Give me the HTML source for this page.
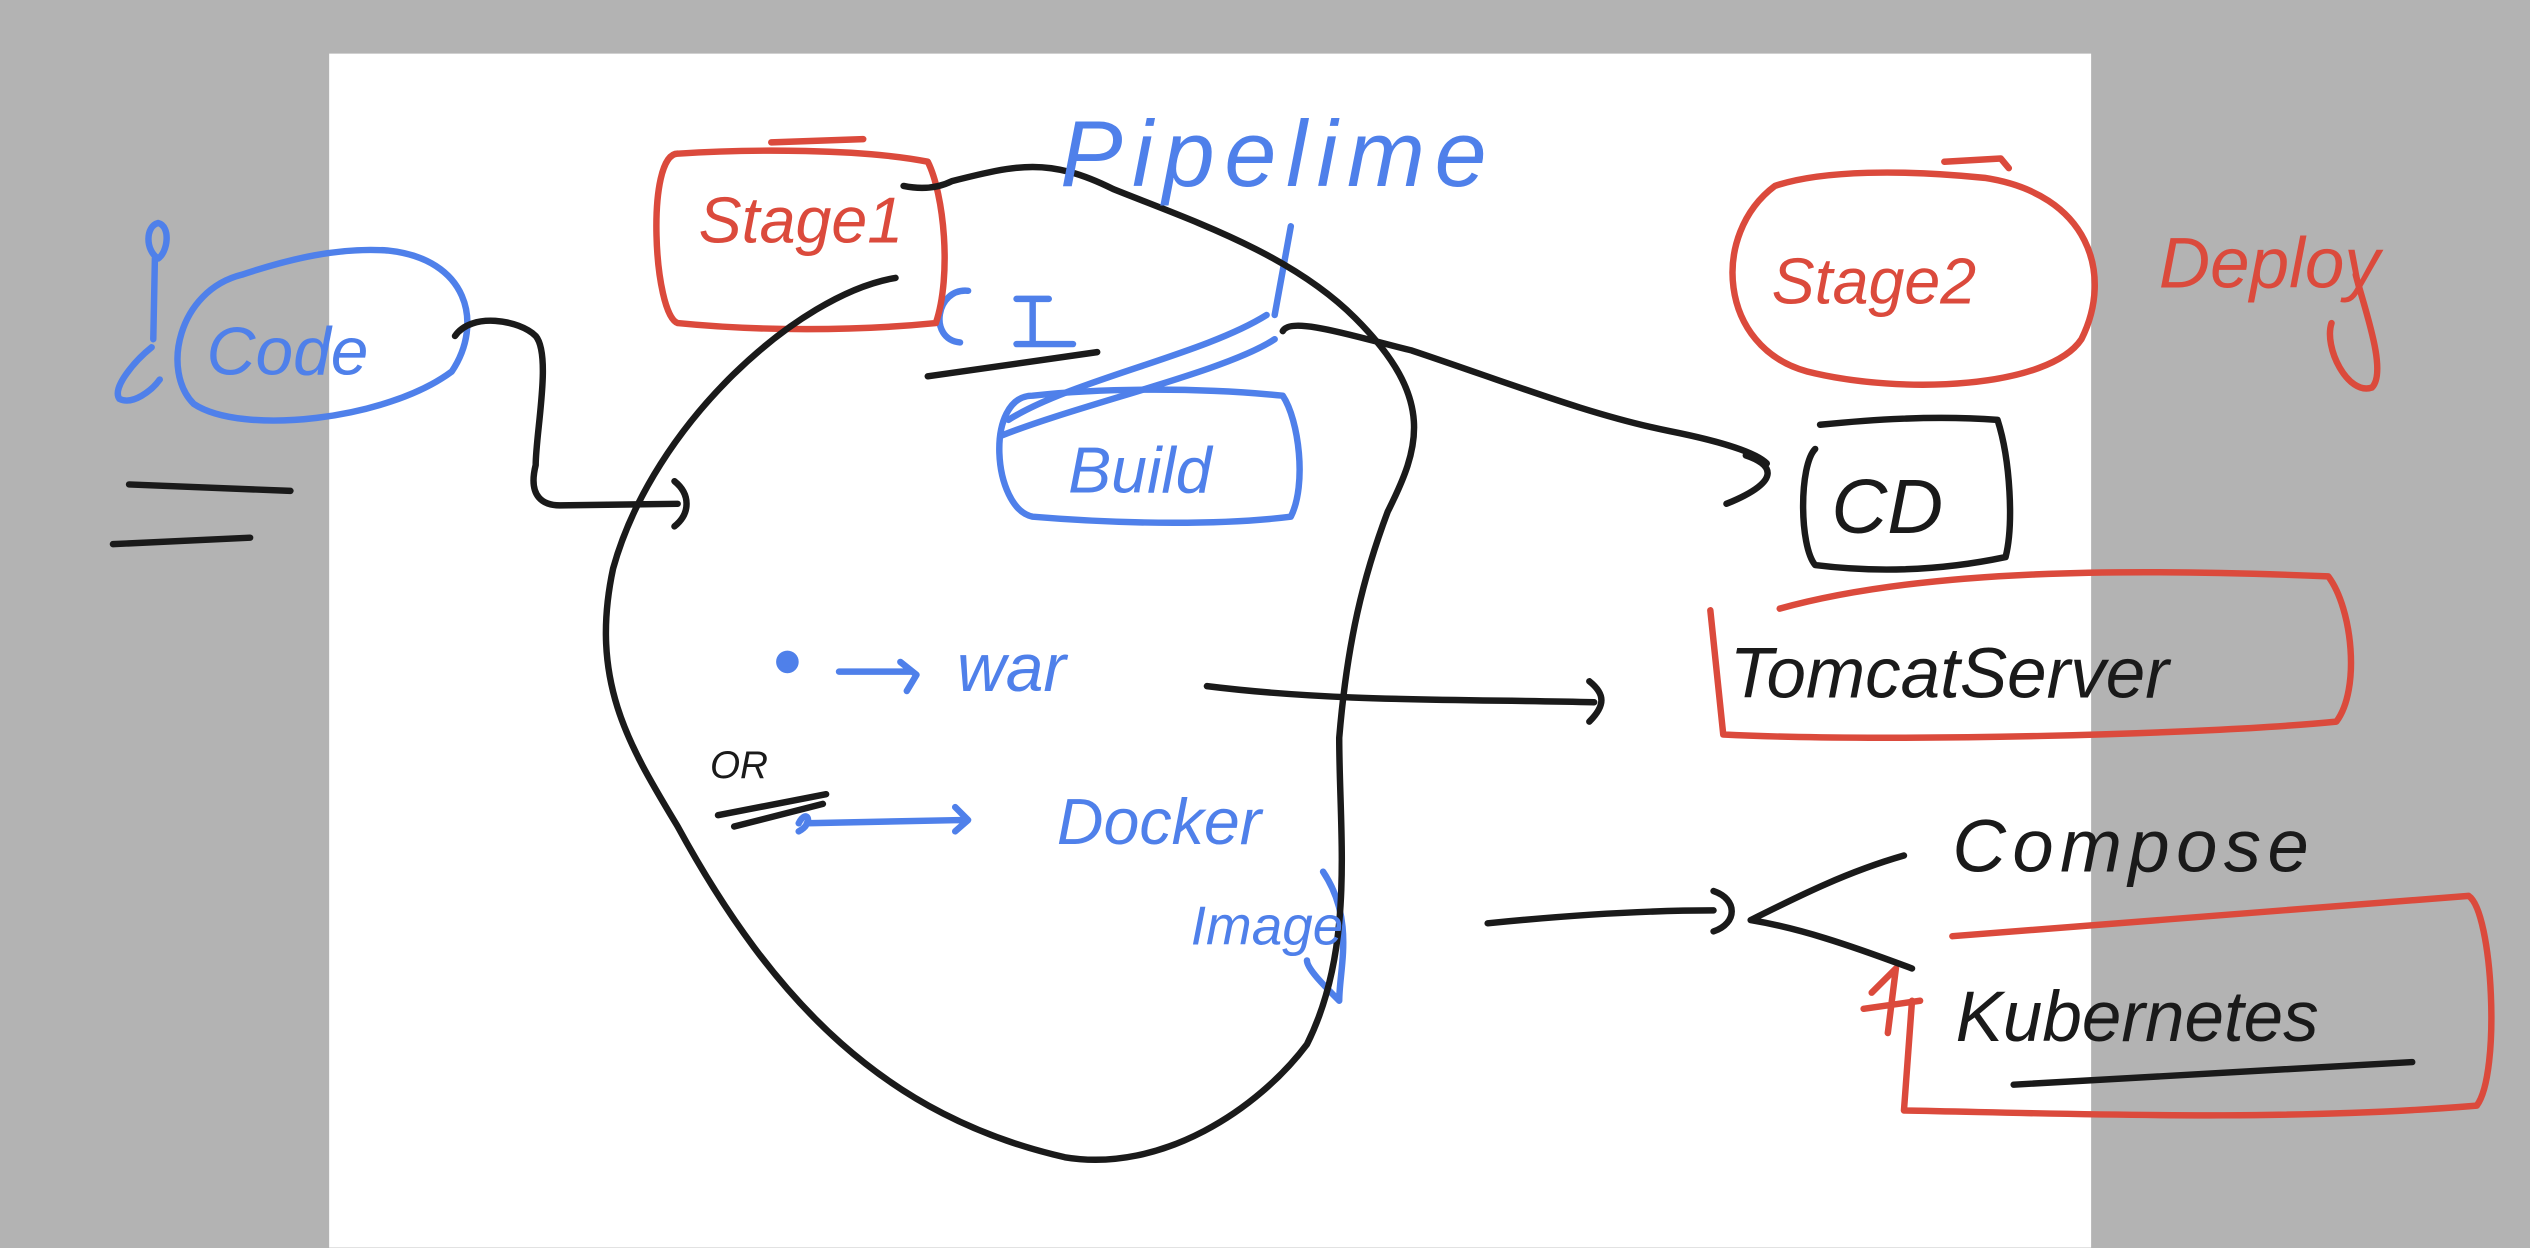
<!DOCTYPE html>
<html><head><meta charset="utf-8"><style>
html,body{margin:0;padding:0;width:2530px;height:1248px;overflow:hidden;background:#b3b3b3}
svg{display:block}
text{font-family:"Liberation Sans",sans-serif}
</style></head><body>
<svg width="2530" height="1248" viewBox="0 0 1568 773" xmlns="http://www.w3.org/2000/svg">
<rect width="1568" height="773" fill="#b3b3b3"/>
<rect x="204" y="33" width="1092" height="740" fill="#ffffff"/>
<g fill="none" stroke-linecap="round" stroke-linejoin="round" stroke-width="4">
<!-- blue -->
<g stroke="#4f80ea">
<path d="M98 160 c-8 -5 -8 -20 0 -22 c8 2 6 18 0 22 M96 160 L95 210 M94 215 c-10 8 -25 25 -20 32 c8 4 20 -5 25 -12"/>
<path d="M150 170 c-40 10 -50 60 -30 80 c30 20 120 10 160 -20 c20 -30 10 -70 -40 -75 c-30 -2 -60 5 -90 15"/>
<path d="M800 140 L790 195 M785 195 c-40 25 -120 40 -160 65 M790 210 c-30 20 -120 40 -170 60"/>
<path d="M640 245 c-30 0 -25 70 0 75 c60 5 120 5 160 0 c10 -20 5 -60 -5 -75 c-50 -5 -110 -5 -155 0"/>
<path d="M600 180 c-20 -2 -25 30 -5 32 M630 185 L650 185 M640 185 L640 212 M630 213 L665 213"/>
<circle cx="488" cy="410" r="5" fill="#4f80ea"/>
<path d="M520 416 L565 416 M558 410 L568 418 L562 428"/>
<path d="M500 510 L595 508 M592 500 L600 508 L592 515 M495 515 c10 -5 5 -15 0 -5"/>
<path d="M820 540 c20 30 10 60 10 80 c-10 -10 -20 -20 -20 -25"/>
</g>
<!-- red -->
<g stroke="#db4a3c">
<path d="M420 95 c-20 0 -15 100 0 105 c50 5 110 5 160 0 c10 -30 5 -80 -5 -100 c-40 -8 -110 -8 -155 -5 M478 88 L535 86"/>
<path d="M1100 115 c-40 30 -35 100 20 115 c60 15 150 10 170 -20 c20 -40 5 -90 -60 -100 c-50 -5 -100 -5 -130 5 M1205 100 L1240 98 L1245 104"/>
<path d="M1060 378 L1068 455 c100 5 300 0 380 -8 c15 -20 10 -70 -5 -90 c-120 -5 -250 -5 -340 20"/>
<path d="M1210 580 L1530 555 c15 10 20 110 5 130 c-120 10 -250 5 -355 3 L1185 620"/>
<path d="M1160 615 L1175 600 L1170 640 M1155 625 L1190 620"/>
<path d="M1460 170 c5 20 20 60 10 70 c-15 5 -30 -25 -25 -40"/>
</g>
<!-- black -->
<g stroke="#1a1a1a">
<path d="M555 172 c-60 10 -150 90 -175 180 c-15 70 10 110 40 160 c60 110 130 180 240 205 c60 10 120 -30 150 -70 c30 -60 20 -130 20 -190 c5 -60 15 -100 30 -140 c20 -40 30 -70 -20 -120 c-40 -40 -100 -60 -150 -80 c-40 -20 -60 -15 -100 -5 c-10 5 -20 5 -30 3"/>
<path d="M282 208 c10 -15 40 -10 50 0 c10 12 0 60 0 80 c-5 20 5 25 15 25 L420 312 M418 298 c10 8 10 20 0 28"/>
<path d="M80 300 L180 304 M70 337 L155 333"/>
<path d="M575 233 L680 218"/>
<path d="M795 205 c5 -10 50 5 80 12 c60 20 110 40 160 50 c40 8 55 15 60 20 M1082 282 c15 5 25 15 -12 30"/>
<path d="M1125 278 c-10 10 -10 60 0 72 c40 5 80 3 118 -5 c5 -20 3 -60 -5 -85 c-40 -3 -80 0 -110 3"/>
<path d="M748 425 c80 10 160 8 240 10 M985 422 c10 8 10 15 0 25"/>
<path d="M922 572 c50 -5 100 -8 140 -8 M1062 552 c15 5 15 20 0 25 M1085 570 c30 -15 60 -30 95 -40 M1085 570 c30 5 60 15 100 30"/>
<path d="M1248 672 L1495 658"/>
<path d="M445 505 L512 492 M455 512 L510 498"/>
</g>
</g>
<g font-size="40" font-style="italic">
<text x="657" y="115" fill="#4f80ea" font-size="58" letter-spacing="6">Pipelime</text>
<text x="433" y="150" fill="#db4a3c" font-size="40">Stage1</text>
<text x="1098" y="188" fill="#db4a3c" font-size="40">Stage2</text>
<text x="1338" y="178" fill="#db4a3c" font-size="44">Deploy</text>
<text x="128" y="232" fill="#4f80ea" font-size="42">Code</text>
<text x="662" y="305" fill="#4f80ea" font-size="40">Build</text>
<text x="1135" y="330" fill="#1a1a1a" font-size="48">CD</text>
<text x="593" y="428" fill="#4f80ea" font-size="42">war</text>
<text x="440" y="482" fill="#1a1a1a" font-size="24">OR</text>
<text x="655" y="523" fill="#4f80ea" font-size="40">Docker</text>
<text x="738" y="585" fill="#4f80ea" font-size="34">Image</text>
<text x="1072" y="432" fill="#1a1a1a" font-size="44">TomcatServer</text>
<text x="1210" y="540" fill="#1a1a1a" font-size="46" letter-spacing="4">Compose</text>
<text x="1212" y="645" fill="#1a1a1a" font-size="44">Kubernetes</text>
</g>
</svg>
</body></html>
